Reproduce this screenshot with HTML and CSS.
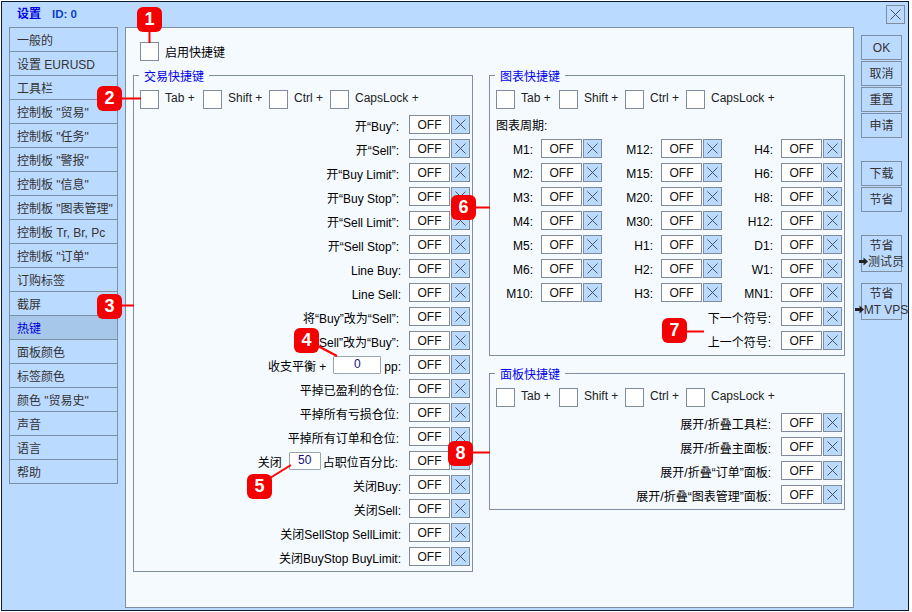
FILE: index.html
```html
<!DOCTYPE html>
<html lang="zh-CN">
<head>
<meta charset="utf-8">
<title>设置</title>
<link rel="stylesheet" href="styles.css">
</head>
<body>
<svg class="defs" aria-hidden="true"><symbol id="x" viewBox="0 0 11 11"><path d="M.5.5l10 10M10.5.5l-10 10" fill="none" stroke="#3f4650" stroke-width=".9"/></symbol></svg>
<div class="win">
  <header class="titlebar">
    <span class="title">设置</span><span class="winid">ID: 0</span>
    <span class="xb close"><svg class="xi"><use href="#x"/></svg></span>
  </header>
  <div class="main">
    <nav class="side">
      <div class="tab">一般的</div>
      <div class="tab">设置 EURUSD</div>
      <div class="tab">工具栏</div>
      <div class="tab">控制板 "贸易"</div>
      <div class="tab">控制板 "任务"</div>
      <div class="tab">控制板 "警报"</div>
      <div class="tab">控制板 "信息"</div>
      <div class="tab">控制板 "图表管理"</div>
      <div class="tab">控制板 Tr, Br, Pc</div>
      <div class="tab">控制板 "订单"</div>
      <div class="tab">订购标签</div>
      <div class="tab">截屏</div>
      <div class="tab active">热键</div>
      <div class="tab">面板颜色</div>
      <div class="tab">标签颜色</div>
      <div class="tab">颜色 "贸易史"</div>
      <div class="tab">声音</div>
      <div class="tab">语言</div>
      <div class="tab">帮助</div>
    </nav>
    <main class="panel">
      <div class="enable"><span class="cb"></span><span class="enable-label">启用快捷键</span></div>
      <div class="groups">
        <fieldset class="group left">
          <legend>交易快捷键</legend>
          <div class="keys"><span class="key k-tab"><span class="cb"></span>Tab +</span><span class="key k-shift"><span class="cb"></span>Shift +</span><span class="key k-ctrl"><span class="cb"></span>Ctrl +</span><span class="key"><span class="cb"></span>CapsLock +</span></div>
          <div class="row"><span class="lbl e2">开“Buy”:</span><span class="off">OFF</span><span class="xb"><svg class="xi"><use href="#x"/></svg></span></div>
          <div class="row"><span class="lbl e2">开“Sell”:</span><span class="off">OFF</span><span class="xb"><svg class="xi"><use href="#x"/></svg></span></div>
          <div class="row"><span class="lbl e2">开“Buy Limit”:</span><span class="off">OFF</span><span class="xb"><svg class="xi"><use href="#x"/></svg></span></div>
          <div class="row"><span class="lbl e2">开“Buy Stop”:</span><span class="off">OFF</span><span class="xb"><svg class="xi"><use href="#x"/></svg></span></div>
          <div class="row"><span class="lbl e2">开“Sell Limit”:</span><span class="off">OFF</span><span class="xb"><svg class="xi"><use href="#x"/></svg></span></div>
          <div class="row"><span class="lbl e2">开“Sell Stop”:</span><span class="off">OFF</span><span class="xb"><svg class="xi"><use href="#x"/></svg></span></div>
          <div class="row"><span class="lbl">Line Buy:</span><span class="off">OFF</span><span class="xb"><svg class="xi"><use href="#x"/></svg></span></div>
          <div class="row"><span class="lbl">Line Sell:</span><span class="off">OFF</span><span class="xb"><svg class="xi"><use href="#x"/></svg></span></div>
          <div class="row"><span class="lbl e2">将“Buy”改为“Sell”:</span><span class="off">OFF</span><span class="xb"><svg class="xi"><use href="#x"/></svg></span></div>
          <div class="row"><span class="lbl e2">将“Sell”改为“Buy”:</span><span class="off">OFF</span><span class="xb"><svg class="xi"><use href="#x"/></svg></span></div>
          <div class="row"><span class="lbl">收支平衡 +</span><span class="num num-pp">0</span><span class="lbl">pp:</span><span class="off">OFF</span><span class="xb"><svg class="xi"><use href="#x"/></svg></span></div>
          <div class="row"><span class="lbl e2">平掉已盈利的仓位:</span><span class="off">OFF</span><span class="xb"><svg class="xi"><use href="#x"/></svg></span></div>
          <div class="row"><span class="lbl e2">平掉所有亏损仓位:</span><span class="off">OFF</span><span class="xb"><svg class="xi"><use href="#x"/></svg></span></div>
          <div class="row"><span class="lbl e2">平掉所有订单和仓位:</span><span class="off">OFF</span><span class="xb"><svg class="xi"><use href="#x"/></svg></span></div>
          <div class="row"><span class="lbl">关闭</span><span class="num num-pct">50</span><span class="lbl e3">占职位百分比:</span><span class="off">OFF</span><span class="xb"><svg class="xi"><use href="#x"/></svg></span></div>
          <div class="row"><span class="lbl">关闭Buy:</span><span class="off">OFF</span><span class="xb"><svg class="xi"><use href="#x"/></svg></span></div>
          <div class="row"><span class="lbl">关闭Sell:</span><span class="off">OFF</span><span class="xb"><svg class="xi"><use href="#x"/></svg></span></div>
          <div class="row"><span class="lbl">关闭SellStop SellLimit:</span><span class="off">OFF</span><span class="xb"><svg class="xi"><use href="#x"/></svg></span></div>
          <div class="row"><span class="lbl">关闭BuyStop BuyLimit:</span><span class="off">OFF</span><span class="xb"><svg class="xi"><use href="#x"/></svg></span></div>
        </fieldset>
        <div class="right-col">
          <fieldset class="group">
            <legend>图表快捷键</legend>
            <div class="keys"><span class="key k-tab"><span class="cb"></span>Tab +</span><span class="key k-shift"><span class="cb"></span>Shift +</span><span class="key k-ctrl"><span class="cb"></span>Ctrl +</span><span class="key"><span class="cb"></span>CapsLock +</span></div>
            <div class="period">图表周期:</div>
            <div class="tf">
              <div class="row"><span class="lbl">M1:</span><span class="off">OFF</span><span class="xb"><svg class="xi"><use href="#x"/></svg></span></div>
              <div class="row"><span class="lbl">M12:</span><span class="off">OFF</span><span class="xb"><svg class="xi"><use href="#x"/></svg></span></div>
              <div class="row"><span class="lbl">H4:</span><span class="off">OFF</span><span class="xb"><svg class="xi"><use href="#x"/></svg></span></div>
              <div class="row"><span class="lbl">M2:</span><span class="off">OFF</span><span class="xb"><svg class="xi"><use href="#x"/></svg></span></div>
              <div class="row"><span class="lbl">M15:</span><span class="off">OFF</span><span class="xb"><svg class="xi"><use href="#x"/></svg></span></div>
              <div class="row"><span class="lbl">H6:</span><span class="off">OFF</span><span class="xb"><svg class="xi"><use href="#x"/></svg></span></div>
              <div class="row"><span class="lbl">M3:</span><span class="off">OFF</span><span class="xb"><svg class="xi"><use href="#x"/></svg></span></div>
              <div class="row"><span class="lbl">M20:</span><span class="off">OFF</span><span class="xb"><svg class="xi"><use href="#x"/></svg></span></div>
              <div class="row"><span class="lbl">H8:</span><span class="off">OFF</span><span class="xb"><svg class="xi"><use href="#x"/></svg></span></div>
              <div class="row"><span class="lbl">M4:</span><span class="off">OFF</span><span class="xb"><svg class="xi"><use href="#x"/></svg></span></div>
              <div class="row"><span class="lbl">M30:</span><span class="off">OFF</span><span class="xb"><svg class="xi"><use href="#x"/></svg></span></div>
              <div class="row"><span class="lbl">H12:</span><span class="off">OFF</span><span class="xb"><svg class="xi"><use href="#x"/></svg></span></div>
              <div class="row"><span class="lbl">M5:</span><span class="off">OFF</span><span class="xb"><svg class="xi"><use href="#x"/></svg></span></div>
              <div class="row"><span class="lbl">H1:</span><span class="off">OFF</span><span class="xb"><svg class="xi"><use href="#x"/></svg></span></div>
              <div class="row"><span class="lbl">D1:</span><span class="off">OFF</span><span class="xb"><svg class="xi"><use href="#x"/></svg></span></div>
              <div class="row"><span class="lbl">M6:</span><span class="off">OFF</span><span class="xb"><svg class="xi"><use href="#x"/></svg></span></div>
              <div class="row"><span class="lbl">H2:</span><span class="off">OFF</span><span class="xb"><svg class="xi"><use href="#x"/></svg></span></div>
              <div class="row"><span class="lbl">W1:</span><span class="off">OFF</span><span class="xb"><svg class="xi"><use href="#x"/></svg></span></div>
              <div class="row"><span class="lbl">M10:</span><span class="off">OFF</span><span class="xb"><svg class="xi"><use href="#x"/></svg></span></div>
              <div class="row"><span class="lbl">H3:</span><span class="off">OFF</span><span class="xb"><svg class="xi"><use href="#x"/></svg></span></div>
              <div class="row"><span class="lbl">MN1:</span><span class="off">OFF</span><span class="xb"><svg class="xi"><use href="#x"/></svg></span></div>
            </div>
            <div class="row"><span class="lbl e2">下一个符号:</span><span class="off">OFF</span><span class="xb"><svg class="xi"><use href="#x"/></svg></span></div>
            <div class="row"><span class="lbl e2">上一个符号:</span><span class="off">OFF</span><span class="xb"><svg class="xi"><use href="#x"/></svg></span></div>
          </fieldset>
          <fieldset class="group">
            <legend>面板快捷键</legend>
            <div class="keys"><span class="key k-tab"><span class="cb"></span>Tab +</span><span class="key k-shift"><span class="cb"></span>Shift +</span><span class="key k-ctrl"><span class="cb"></span>Ctrl +</span><span class="key"><span class="cb"></span>CapsLock +</span></div>
            <div class="row"><span class="lbl e2">展开/折叠工具栏:</span><span class="off">OFF</span><span class="xb"><svg class="xi"><use href="#x"/></svg></span></div>
            <div class="row"><span class="lbl e2">展开/折叠主面板:</span><span class="off">OFF</span><span class="xb"><svg class="xi"><use href="#x"/></svg></span></div>
            <div class="row"><span class="lbl e2">展开/折叠“订单”面板:</span><span class="off">OFF</span><span class="xb"><svg class="xi"><use href="#x"/></svg></span></div>
            <div class="row"><span class="lbl e2">展开/折叠“图表管理”面板:</span><span class="off">OFF</span><span class="xb"><svg class="xi"><use href="#x"/></svg></span></div>
          </fieldset>
        </div>
      </div>
    </main>
    <aside class="actions">
      <div class="btn">OK</div>
      <div class="btn">取消</div>
      <div class="btn">重置</div>
      <div class="btn">申请</div>
      <div class="btn sep-a">下载</div>
      <div class="btn">节省</div>
      <div class="btn tall sep-b"><span>节省</span><span class="send"><svg class="arrow" viewBox="0 0 9 9"><path d="M0 3h4.500V.5L9 4.500 4.500 8.500V6H0z" fill="#222"/></svg>测试员</span></div>
      <div class="btn tall sep-c"><span>节省</span><span class="send"><svg class="arrow" viewBox="0 0 9 9"><path d="M0 3h4.500V.5L9 4.500 4.500 8.500V6H0z" fill="#222"/></svg>MT VPS</span></div>
    </aside>
  </div>
</div>
<svg class="leaders" width="912" height="612" aria-hidden="true">
  <path d="M149.500 30V43M120 98.500H141M120 305.500H134M316 345L337 356M270 478L291 465M474 207.500H490M685 331.500H704M471 452.500H490" fill="none" stroke="#f00" stroke-width="2"/>
</svg>
<div class="badge b1">1</div>
<div class="badge b2">2</div>
<div class="badge b3">3</div>
<div class="badge b4">4</div>
<div class="badge b5">5</div>
<div class="badge b6">6</div>
<div class="badge b7">7</div>
<div class="badge b8">8</div>
</body>
</html>
```

FILE: styles.css
```css
* { box-sizing: border-box; }

html, body { margin: 0; padding: 0; background: #fff; }

body {
  position: relative;
  width: 912px;
  height: 612px;
  overflow: hidden;
  padding: 1px;
  font: 12px/16px "Liberation Sans", "Noto Sans CJK SC", sans-serif;
  color: #111;
}

.defs { position: absolute; width: 0; height: 0; }

.win {
  width: 908px;
  height: 610px;
  border: 1px solid #0b1a30;
  background: #bbdaff;
}

.titlebar {
  display: flex;
  height: 25px;
  padding-left: 15px;
  line-height: 25px;
  font-weight: 700;
}
.title { color: #0000e6; width: 35px; }
.winid { color: #0a3fd0; font-size: 11.500px; }
.close { margin: 3px 3px 0 auto; }

.main { display: flex; padding-left: 7px; }

.side { width: 109px; }
.tab {
  height: 24px;
  padding: 5px 0 0 7px;
  border: 1px solid #7f8fa3;
  border-top: 0;
  color: #333;
  white-space: nowrap;
}
.tab:first-child { height: 25px; padding-top: 5px; border-top: 1px solid #7f8fa3; }
.tab.active { background: #a6c6ea; color: #0000e0; }

.panel {
  width: 729px;
  height: 581px;
  margin-left: 7px;
  padding: 14px 7px 0;
  border: 1px solid #7f8fa3;
  background: #f5faff;
}

.enable { display: flex; align-items: center; height: 19px; padding-left: 7px; }
.enable-label { padding-top: 2px; color: #000; }

.cb {
  flex: none;
  display: block;
  width: 19px;
  height: 19px;
  margin-right: 6px;
  border: 1px solid #808c9b;
  background: #fff;
}

.groups { display: flex; gap: 16px; margin-top: 6px; align-items: flex-start; }
.right-col { display: flex; flex-direction: column; gap: 9px; }

.group {
  display: block;
  width: 356px;
  margin: 0;
  padding: 7px 2px 5px 6px;
  border: 1px solid #7f8fa3;
  min-width: 0;
}
.group.left { width: 340px; }
.group legend {
  height: 16px;
  margin-left: -1px;
  padding: 0 5px;
  line-height: 20px;
  color: #0000f0;
}

.keys { display: flex; height: 19px; color: #222; }
.key { display: flex; align-items: flex-start; height: 19px; line-height: 17px; }
.k-tab { width: 63px; }
.k-shift { width: 66px; }
.k-ctrl { width: 61px; }

.row {
  display: flex;
  justify-content: flex-end;
  align-items: center;
  height: 19px;
  margin-top: 5px;
  color: #000;
  white-space: nowrap;
}
.keys + .row { margin-top: 6px; }
.lbl { padding-top: 4px; margin-right: 8px; }
.lbl.e2 { margin-right: 10px; }
.lbl.e3 { margin-right: 11px; }
.tf .lbl { padding-top: 3px; }

.off {
  flex: none;
  width: 41px;
  height: 19px;
  border: 1px solid #808c9b;
  background: #fff;
  line-height: 18px;
  text-align: center;
  font-size: 12px;
  color: #111;
  margin-right: 1px;
}

.xb {
  flex: none;
  display: flex;
  align-items: center;
  justify-content: center;
  width: 19px;
  height: 19px;
  border: 1px solid #808c9b;
  background: #bbdaff;
}
.xi { width: 11px; height: 11px; display: block; }

.num {
  flex: none;
  height: 18px;
  border: 1px solid #9aa5b2;
  border-radius: 1px;
  background: #fff;
  line-height: 15px;
  text-align: center;
  color: #10107a;
}
.num-pp { width: 48px; margin: 0 3px 0 -1px; }
.num-pct { width: 32px; margin: 0 2px 0 -1px; }

.period { height: 19px; margin-top: 6px; padding-top: 3px; color: #000; }

.tf {
  display: grid;
  grid-template-columns: 112px 120px 120px;
  justify-content: end;
}

.actions { display: flex; flex-direction: column; gap: 1px; width: 41px; margin-left: 7px; padding-top: 8px; }

.btn {
  display: flex;
  flex-direction: column;
  align-items: center;
  justify-content: center;
  flex: none;
  height: 25px;
  border: 1px solid #7f8fa3;
  color: #333;
  white-space: nowrap;
}
.btn.tall { height: 37px; }
.sep-a { margin-top: 22px; }
.sep-b { margin-top: 22px; }
.sep-c { margin-top: 10px; }
.send { display: flex; align-items: center; justify-content: center; width: 41px; }
.arrow { flex: none; width: 9px; height: 9px; }

.leaders { position: absolute; left: 0; top: 0; pointer-events: none; }

.badge {
  position: absolute;
  width: 25px;
  height: 25px;
  border-radius: 6px;
  background: #f40000;
  color: #fff;
  font: 700 18px/25px "Liberation Sans", sans-serif;
  text-align: center;
}
.b1 { left: 137px; top: 7px; }
.b2 { left: 97px; top: 86px; }
.b3 { left: 97px; top: 294px; }
.b4 { left: 294px; top: 328px; }
.b5 { left: 247px; top: 474px; }
.b6 { left: 451px; top: 195px; }
.b7 { left: 662px; top: 318px; }
.b8 { left: 448px; top: 441px; }
```
